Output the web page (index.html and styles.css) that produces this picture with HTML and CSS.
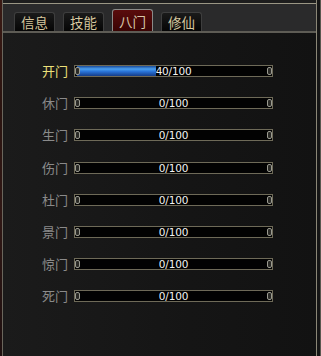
FILE: index.html
```html
<!DOCTYPE html>
<html>
<head>
<meta charset="utf-8">
<link rel="stylesheet" href="styles.css">
</head>
<body>
<div class="win">
  <div class="edge-left"></div>
  <div class="main">
    <div class="topline"></div>
    <div class="tabbar">
      <div class="tab">信息</div>
      <div class="tab">技能</div>
      <div class="tab active">八门</div>
      <div class="tab">修仙</div>
    </div>
    <div class="content">
      <div class="row on"><span class="label">开门</span><div class="bar"><i class="cap l"></i><div class="fill" style="width:40%"></div><span class="val">40/100</span><i class="cap r"></i></div></div>
      <div class="row"><span class="label">休门</span><div class="bar"><i class="cap l"></i><span class="val">0/100</span><i class="cap r"></i></div></div>
      <div class="row"><span class="label">生门</span><div class="bar"><i class="cap l"></i><span class="val">0/100</span><i class="cap r"></i></div></div>
      <div class="row"><span class="label">伤门</span><div class="bar"><i class="cap l"></i><span class="val">0/100</span><i class="cap r"></i></div></div>
      <div class="row"><span class="label">杜门</span><div class="bar"><i class="cap l"></i><span class="val">0/100</span><i class="cap r"></i></div></div>
      <div class="row"><span class="label">景门</span><div class="bar"><i class="cap l"></i><span class="val">0/100</span><i class="cap r"></i></div></div>
      <div class="row"><span class="label">惊门</span><div class="bar"><i class="cap l"></i><span class="val">0/100</span><i class="cap r"></i></div></div>
      <div class="row"><span class="label">死门</span><div class="bar"><i class="cap l"></i><span class="val">0/100</span><i class="cap r"></i></div></div>
    </div>
  </div>
  <div class="edge-right"></div>
</div>
</body>
</html>
```
FILE: styles.css
```css
html, body { margin: 0; padding: 0; background: #131313; }
.win {
  width: 321px; height: 356px; display: flex; overflow: hidden;
  font-family: "Noto Sans CJK SC", "DejaVu Sans", sans-serif;
}
.edge-left {
  width: 2px; flex: none;
  background: linear-gradient(#3a1a14, #2a1410 30%, #301815 60%, #1e1010);
  border-right: 1px solid #6a665c;
}
.edge-right {
  width: 4px; flex: none;
  border-left: 1px solid #8a8676;
  background: #151515;
  box-shadow: inset -1px 0 0 #5a5850;
}
.main { flex: 1; display: flex; flex-direction: column; min-width: 0; }
.topline { height: 3px; background: #1d1d1d; border-bottom: 1px solid #9a9684; }
.tabbar {
  height: 27px; background: #2a2a2b;
  border-bottom: 2px solid #5e5c55;
  display: flex; align-items: flex-end; gap: 8px;
  padding-left: 11px;
}
.tab {
  width: 39px; height: 18px;
  border: 1px solid #3e3e3e; border-bottom: none;
  border-radius: 3px 3px 0 0;
  background: linear-gradient(#1a1a1a, #050505);
  color: #d6c79e; font-size: 13.5px; line-height: 19px; text-align: center;
}
.tab.active {
  height: 21px; line-height: 23px;
  border-color: #8a8a88;
  background: linear-gradient(#5a0c0c, #3a0404);
  color: #d8c8a8;
}
.content {
  flex: 1;
  background: linear-gradient(90deg, #1b1b1b, #151515 60%, #121212);
  padding: 32px 0 0 39px;
  display: flex; flex-direction: column; gap: 20.2px;
}
.row { display: flex; align-items: center; height: 12px; gap: 5px; }
.label { width: 27px; font-size: 13px; color: #8a8a8a; line-height: 12px; white-space: nowrap; }
.row.on .label { color: #ece07a; }
.bar {
  position: relative; width: 197px; height: 10px;
  border: 1px solid #6e6a58; background: #020202;
  display: flex; align-items: center; justify-content: center;
}
.fill {
  position: absolute; left: 2px; top: 0; bottom: 0;
  background: linear-gradient(#1a4a98, #4aa0f0 30%, #2a74d8 55%, #143c88);
}
.val {
  position: relative; color: #f2f2f2; font-family: "DejaVu Sans", sans-serif;
  font-size: 10.5px; line-height: 10px; letter-spacing: -0.2px;
  text-shadow: 0 0 1px #000;
}
.cap {
  position: absolute; top: 0; width: 3px; height: 6px;
  border: 1px solid #9a9a90; border-radius: 2px; background: #2a2a26;
  margin-top: 1px; z-index: 1;
}
.cap.l { left: 0; }
.cap.r { right: 0; }
```
